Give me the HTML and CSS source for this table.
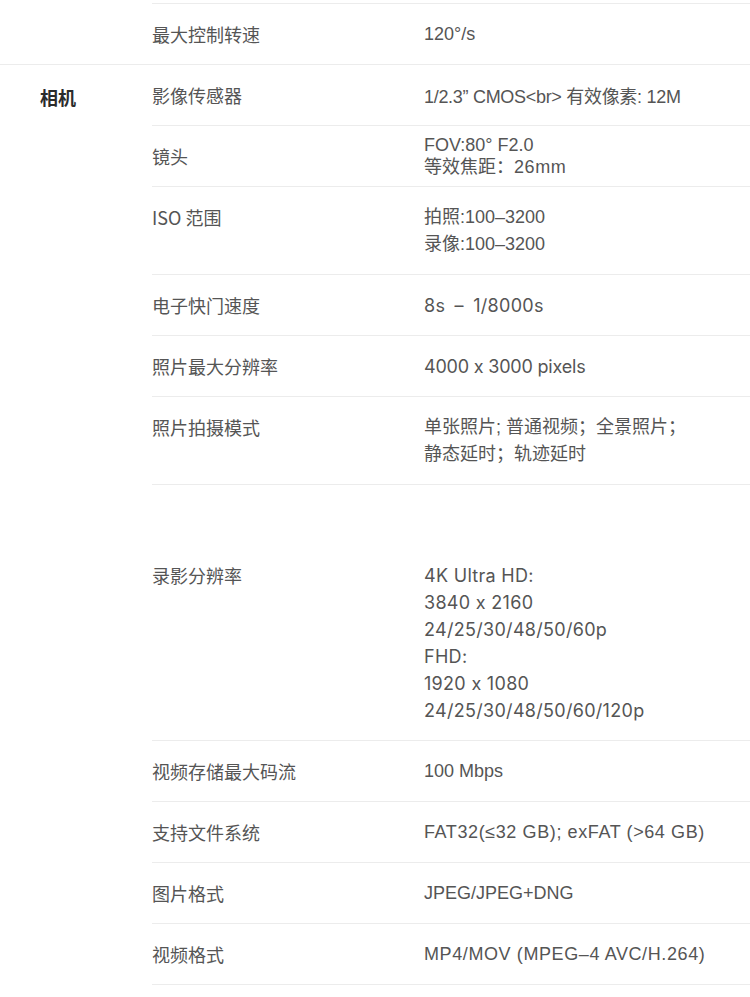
FILE: index.html
```html
<!DOCTYPE html>
<html lang="zh-CN">
<head>
<meta charset="utf-8">
<title>规格参数</title>
<link rel="stylesheet" href="styles.css">
</head>
<body>
<div class="specs">
  <section class="group">
    <div class="cat"></div>
    <div class="rows">
      <div class="row row-stub"></div>
      <div class="row">
        <div class="label">最大控制转速</div>
        <div class="value">120°/s</div>
      </div>
    </div>
  </section>
  <section class="group">
    <div class="cat">相机</div>
    <div class="rows">
      <div class="row">
        <div class="label">影像传感器</div>
        <div class="value narrow">1/2.3” CMOS&lt;br&gt; 有效像素: 12M</div>
      </div>
      <div class="row">
        <div class="label">镜头</div>
        <div class="value value-tight">FOV:80° F2.0<br>等效焦距：<span class="loose">26mm</span></div>
      </div>
      <div class="row">
        <div class="label">ISO 范围</div>
        <div class="value">拍照:100–3200<br>录像:100–3200</div>
      </div>
      <div class="row">
        <div class="label">电子快门速度</div>
        <div class="value wide">8s&ensp;–&ensp;1/8000s</div>
      </div>
      <div class="row">
        <div class="label">照片最大分辨率</div>
        <div class="value wide tight-wide">4000 x 3000 pixels</div>
      </div>
      <div class="row">
        <div class="label">照片拍摄模式</div>
        <div class="value">单张照片; 普通视频；全景照片；<br>静态延时；轨迹延时</div>
      </div>
      <div class="row row-tall">
        <div class="label">录影分辨率</div>
        <div class="value wide">4K Ultra HD:<br>3840 x 2160<br>24/25/30/48/50/60p<br>FHD:<br>1920 x 1080<br>24/25/30/48/50/60/120p</div>
      </div>
      <div class="row">
        <div class="label">视频存储最大码流</div>
        <div class="value">100 Mbps</div>
      </div>
      <div class="row">
        <div class="label">支持文件系统</div>
        <div class="value loose">FAT32(≤32 GB); exFAT (&gt;64 GB)</div>
      </div>
      <div class="row">
        <div class="label">图片格式</div>
        <div class="value">JPEG/JPEG+DNG</div>
      </div>
      <div class="row">
        <div class="label">视频格式</div>
        <div class="value loose">MP4/MOV (MPEG–4 AVC/H.264)</div>
      </div>
    </div>
  </section>
</div>
</body>
</html>
```

FILE: styles.css
```css
html, body {
  margin: 0;
  padding: 0;
  background: #ffffff;
}

body {
  font-family: "Liberation Sans", "Noto Sans CJK SC", sans-serif;
  font-size: 18px;
  color: #555555;
  overflow: hidden;
}

.specs {
  width: 750px;
}

.group {
  display: flex;
  border-bottom: 1px solid #ececec;
}

.group:last-child {
  border-bottom: none;
}

.cat {
  width: 152px;
  flex: none;
  box-sizing: border-box;
  padding: 19px 0 14px 40px;
  line-height: 27px;
  font-family: "Noto Sans CJK SC", sans-serif;
  font-weight: 700;
  color: #2b2b2b;
}

.rows {
  flex: 1;
  min-width: 0;
}

.row {
  display: grid;
  grid-template-columns: 272px 1fr;
  border-bottom: 1px solid #ececec;
}

.group:first-child .row:last-child {
  border-bottom: none;
}

.row-stub {
  height: 3px;
}

.label {
  padding: 17px 0 16px;
  line-height: 27px;
  font-family: "Noto Sans CJK SC", sans-serif;
  white-space: nowrap;
}

.value {
  padding: 17px 0 16px;
  line-height: 27px;
  white-space: nowrap;
}

.value-tight {
  padding: 8px 0;
  line-height: 22px;
}

.row-tall .label,
.row-tall .value {
  padding-top: 77px;
}

.narrow {
  padding-top: 19px;
  padding-bottom: 14px;
  letter-spacing: -0.3px;
}

.loose {
  letter-spacing: 0.6px;
}

.wide {
  font-family: "Inter", "Noto Sans CJK SC", sans-serif;
  font-feature-settings: "calt" 0;
  letter-spacing: 0.3px;
}

.tight-wide {
  letter-spacing: -0.2px;
}
```
